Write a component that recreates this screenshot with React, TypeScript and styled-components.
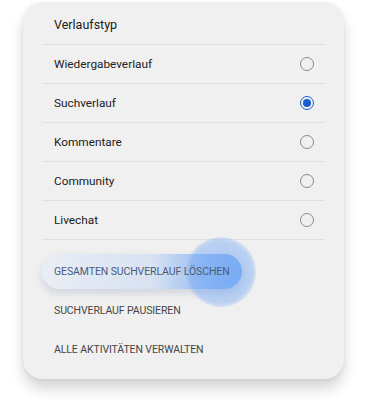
import React from 'react';
import styled, { createGlobalStyle } from 'styled-components';

const Global = createGlobalStyle`
    html, body {
        margin: 0;
        padding: 0;
        background: #ffffff;
        font-family: Roboto, 'Liberation Sans', sans-serif;
    }
`;

const Page = styled.div`
    width: 368px;
    height: 404px;
    padding: 2px 0 0 23px;
    box-sizing: border-box;
`;

const Card = styled.div`
    width: 321px;
    height: 377px;
    background: #f0f0f0;
    border-radius: 20px;
    box-shadow: 0 10px 14px rgba(0, 0, 0, 0.16), 0 1px 4px rgba(0, 0, 0, 0.06);
    padding: 0 19px;
    box-sizing: border-box;
    display: flex;
    flex-direction: column;
`;

const Title = styled.div`
    height: 43px;
    box-sizing: border-box;
    display: flex;
    align-items: center;
    padding: 2px 0 0 12px;
    font-size: 12.5px;
    color: #202020;
    border-bottom: 1px solid #e0e0e0;
`;

const Row = styled.div`
    height: 39px;
    box-sizing: border-box;
    display: flex;
    align-items: center;
    justify-content: space-between;
    padding: 0 11px 0 12px;
    font-size: 11.8px;
    color: #222;
    border-bottom: 1px solid #e0e0e0;
`;

const Radio = styled.span<{ $checked?: boolean }>`
    width: 12px;
    height: 12px;
    border-radius: 50%;
    border: 1.4px solid ${(p) => (p.$checked ? '#1a5fd0' : '#8a8a8a')};
    display: flex;
    align-items: center;
    justify-content: center;
    &::after {
        content: '';
        width: 8px;
        height: 8px;
        border-radius: 50%;
        background: ${(p) => (p.$checked ? '#1a5fd0' : 'transparent')};
    }
`;

const Actions = styled.div`
    display: flex;
    flex-direction: column;
    padding-top: 14px;
`;

const Action = styled.div`
    height: 39px;
    display: flex;
    align-items: center;
    padding-left: 12px;
    font-size: 10.5px;
    color: #454545;
    letter-spacing: -0.1px;
`;

const Pill = styled.div`
    position: relative;
    width: 200px;
    height: 35px;
    margin-bottom: 2px;
    border-radius: 18px;
    background: linear-gradient(90deg, #e9edf5 0%, #d8e2f2 55%, #9cc0f2 80%, #7fb0f4 100%);
    box-shadow: 0 4px 8px rgba(60, 80, 120, 0.18);
    display: flex;
    align-items: center;
    padding-left: 12px;
    box-sizing: border-box;
    font-size: 10.5px;
    color: #4c5a78;
    letter-spacing: -0.1px;
`;

const Ripple = styled.span`
    position: absolute;
    left: 144px;
    top: -17px;
    width: 70px;
    height: 70px;
    border-radius: 50%;
    background: radial-gradient(circle, rgba(110, 165, 245, 0.55) 0%, rgba(120, 170, 245, 0.45) 62%, rgba(140, 180, 240, 0.22) 72%, rgba(160, 195, 240, 0.12) 100%);
    pointer-events: none;
`;

const PillText = styled.span`
    position: relative;
`;

const items = [
    { label: 'Wiedergabeverlauf', checked: false },
    { label: 'Suchverlauf', checked: true },
    { label: 'Kommentare', checked: false },
    { label: 'Community', checked: false },
    { label: 'Livechat', checked: false },
];

export default function App() {
    return (
        <Page>
            <Global />
            <Card>
                <Title>Verlaufstyp</Title>
                {items.map((item) => (
                    <Row key={item.label}>
                        <span>{item.label}</span>
                        <Radio $checked={item.checked} />
                    </Row>
                ))}
                <Actions>
                    <Pill>
                        <Ripple />
                        <PillText>GESAMTEN SUCHVERLAUF LÖSCHEN</PillText>
                    </Pill>
                    <Action>SUCHVERLAUF PAUSIEREN</Action>
                    <Action>ALLE AKTIVITÄTEN VERWALTEN</Action>
                </Actions>
            </Card>
        </Page>
    );
}
